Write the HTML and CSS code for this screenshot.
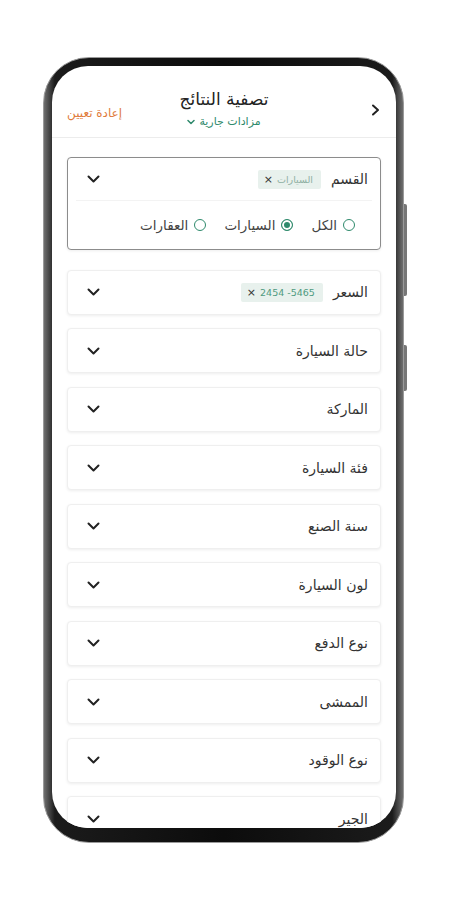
FILE: index.html
```html
<!DOCTYPE html>
<html lang="ar">
<head>
<meta charset="utf-8">
<title>تصفية النتائج</title>
<link rel="stylesheet" href="styles.css">
</head>
<body>
<div class="phone">
  <span class="side-btn btn-a"></span>
  <span class="side-btn btn-b"></span>
  <div class="screen" dir="rtl">
    <header class="topbar">
      <span class="back">
        <svg width="9" height="12" viewBox="0 0 9 12"><path d="M2 1.5 L7 6 L2 10.5" fill="none" stroke="#222" stroke-width="2" stroke-linecap="round" stroke-linejoin="round"/></svg>
      </span>
      <div class="title-block">
        <div class="title">تصفية النتائج</div>
        <div class="subtitle">مزادات جارية
          <svg width="8" height="6" viewBox="0 0 8 6"><path d="M1 1.5 L4 4.5 L7 1.5" fill="none" stroke="#2f8a6c" stroke-width="1.5" stroke-linecap="round" stroke-linejoin="round"/></svg>
        </div>
      </div>
      <span class="reset">إعادة تعيين</span>
    </header>

    <main class="filters">
      <section class="card open">
        <div class="card-head">
          <span class="label">القسم</span>
          <span class="chip"><span class="chip-text">السيارات</span><span class="chip-x">×</span></span>
          <svg class="chev" width="13" height="8" viewBox="0 0 13 8"><path d="M1.5 1.5 L6.5 6.5 L11.5 1.5" fill="none" stroke="#222" stroke-width="2" stroke-linecap="round" stroke-linejoin="round"/></svg>
        </div>
        <div class="radios">
          <label class="radio"><span class="dot"></span>الكل</label>
          <label class="radio"><span class="dot on"></span>السيارات</label>
          <label class="radio"><span class="dot"></span>العقارات</label>
        </div>
      </section>

      <section class="card">
        <div class="card-head">
          <span class="label">السعر</span>
          <span class="chip price"><span class="chip-text" dir="ltr">2454 -5465</span><span class="chip-x">×</span></span>
          <svg class="chev" width="13" height="8" viewBox="0 0 13 8"><path d="M1.5 1.5 L6.5 6.5 L11.5 1.5" fill="none" stroke="#222" stroke-width="2" stroke-linecap="round" stroke-linejoin="round"/></svg>
        </div>
      </section>

      <section class="card"><div class="card-head"><span class="label">حالة السيارة</span><svg class="chev" width="13" height="8" viewBox="0 0 13 8"><path d="M1.5 1.5 L6.5 6.5 L11.5 1.5" fill="none" stroke="#222" stroke-width="2" stroke-linecap="round" stroke-linejoin="round"/></svg></div></section>
      <section class="card"><div class="card-head"><span class="label">الماركة</span><svg class="chev" width="13" height="8" viewBox="0 0 13 8"><path d="M1.5 1.5 L6.5 6.5 L11.5 1.5" fill="none" stroke="#222" stroke-width="2" stroke-linecap="round" stroke-linejoin="round"/></svg></div></section>
      <section class="card"><div class="card-head"><span class="label">فئة السيارة</span><svg class="chev" width="13" height="8" viewBox="0 0 13 8"><path d="M1.5 1.5 L6.5 6.5 L11.5 1.5" fill="none" stroke="#222" stroke-width="2" stroke-linecap="round" stroke-linejoin="round"/></svg></div></section>
      <section class="card"><div class="card-head"><span class="label">سنة الصنع</span><svg class="chev" width="13" height="8" viewBox="0 0 13 8"><path d="M1.5 1.5 L6.5 6.5 L11.5 1.5" fill="none" stroke="#222" stroke-width="2" stroke-linecap="round" stroke-linejoin="round"/></svg></div></section>
      <section class="card"><div class="card-head"><span class="label">لون السيارة</span><svg class="chev" width="13" height="8" viewBox="0 0 13 8"><path d="M1.5 1.5 L6.5 6.5 L11.5 1.5" fill="none" stroke="#222" stroke-width="2" stroke-linecap="round" stroke-linejoin="round"/></svg></div></section>
      <section class="card"><div class="card-head"><span class="label">نوع الدفع</span><svg class="chev" width="13" height="8" viewBox="0 0 13 8"><path d="M1.5 1.5 L6.5 6.5 L11.5 1.5" fill="none" stroke="#222" stroke-width="2" stroke-linecap="round" stroke-linejoin="round"/></svg></div></section>
      <section class="card"><div class="card-head"><span class="label">الممشى</span><svg class="chev" width="13" height="8" viewBox="0 0 13 8"><path d="M1.5 1.5 L6.5 6.5 L11.5 1.5" fill="none" stroke="#222" stroke-width="2" stroke-linecap="round" stroke-linejoin="round"/></svg></div></section>
      <section class="card"><div class="card-head"><span class="label">نوع الوقود</span><svg class="chev" width="13" height="8" viewBox="0 0 13 8"><path d="M1.5 1.5 L6.5 6.5 L11.5 1.5" fill="none" stroke="#222" stroke-width="2" stroke-linecap="round" stroke-linejoin="round"/></svg></div></section>
      <section class="card last"><div class="card-head"><span class="label">الجير</span><svg class="chev" width="13" height="8" viewBox="0 0 13 8"><path d="M1.5 1.5 L6.5 6.5 L11.5 1.5" fill="none" stroke="#222" stroke-width="2" stroke-linecap="round" stroke-linejoin="round"/></svg></div></section>
    </main>
  </div>
</div>
</body>
</html>
```
FILE: styles.css
```css
* { box-sizing: border-box; }
html, body { margin: 0; padding: 0; background: #fff; }
body {
  font-family: "DejaVu Sans", "Noto Sans", sans-serif;
  color: #2a2a2a;
  width: 450px;
  height: 900px;
  overflow: hidden;
}

.phone {
  position: relative;
  width: 361px;
  height: 786px;
  margin: 57px 46px 0 43px;
  background: linear-gradient(90deg, #6f6f6f 0%, #1b1b1b 3%, #0c0c0c 50%, #1b1b1b 97%, #6f6f6f 100%);
  border: 1.5px solid #9a9a9a;
  border-radius: 46px;
  padding: 8px 7px 14px 8px;
}
.side-btn {
  position: absolute;
  right: -4px;
  width: 3px;
  background: #777;
  border-radius: 0 2px 2px 0;
}
.btn-a { top: 146px; height: 92px; }
.btn-b { top: 287px; height: 46px; }

.screen {
  width: 100%;
  height: 100%;
  background: #fff;
  border-radius: 36px;
  overflow: hidden;
  display: flex;
  flex-direction: column;
}

.topbar {
  flex: 0 0 auto;
  height: 72px;
  border-bottom: 1px solid #ececec;
  display: grid;
  grid-template-columns: 1fr auto 1fr;
  align-items: center;
  padding: 14px 15px 0 15px;
}
.back { display: flex; justify-content: flex-start; padding-right: 1px; margin-top: 2px; }
.title-block {
  display: flex;
  flex-direction: column;
  align-items: center;
  gap: 6px;
}
.title { font-size: 17px; color: #222; font-weight: 500; line-height: 20px; }
.subtitle {
  font-size: 11px;
  line-height: 14px;
  color: #2f8a6c;
  display: flex;
  align-items: center;
  gap: 4px;
}
.reset {
  font-size: 12px;
  color: #e07b3c;
  text-align: left;
  margin-top: 8px;
}

.filters {
  padding: 19px 15px 0 15px;
  display: flex;
  flex-direction: column;
  gap: 13.5px;
}
.card {
  flex: 0 0 auto;
  background: #fff;
  border: 1px solid #efefef;
  border-radius: 4px;
  box-shadow: 0 1px 3px rgba(0,0,0,0.07);
}
.card.open {
  border-color: #8c8c8c;
  margin-bottom: 6px;
}
.card-head {
  height: 43px;
  display: flex;
  align-items: center;
  padding: 0 12px 0 19px;
  gap: 10px;
}
.label { font-size: 14px; color: #333; }
.chip {
  display: flex;
  align-items: center;
  gap: 4px;
  background: #e8f1ed;
  border-radius: 2px;
  height: 19px;
  padding: 0 8px 0 6px;
}
.chip-text { font-size: 9.5px; color: #8fb0a3; }
.chip.price .chip-text { color: #4f9a80; }
.chip-x { font-size: 11px; color: #333; line-height: 1; }
.chev { margin-right: auto; }

.open .card-head { border-bottom: 1px solid #f3f3f3; margin: 0 8px; padding: 0 4px 0 11px; }
.radios {
  height: 48px;
  display: flex;
  align-items: center;
  gap: 18px;
  padding: 0 25px;
}
.radio {
  display: flex;
  align-items: center;
  gap: 6px;
  font-size: 13.5px;
  color: #444;
}
.dot {
  width: 12px;
  height: 12px;
  border: 1px solid #2f8a6c;
  border-radius: 50%;
  display: inline-block;
  background: #fff;
}
.dot.on {
  background: #2f8a6c;
  box-shadow: inset 0 0 0 2px #fff;
}
```
